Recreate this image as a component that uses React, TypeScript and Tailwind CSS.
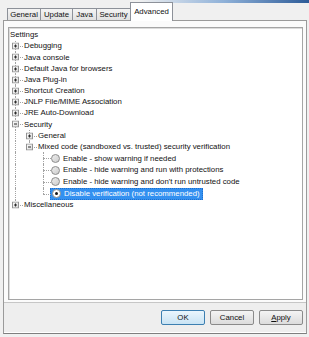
import React from 'react';

type RowProps = {
  guides?: boolean[];
  last?: boolean;
  expander?: 'plus' | 'minus';
  tall?: boolean;
  children: React.ReactNode;
};

const Expander = ({ open }: { open: boolean }) => (
  <svg width="7" height="7" viewBox="0 0 7 7" className="absolute left-[3px] top-1/2 -translate-y-1/2">
    <defs>
      <linearGradient id="exp" x1="0" y1="0" x2="1" y2="1">
        <stop offset="0" stopColor="#ffffff" />
        <stop offset="1" stopColor="#d9d9d9" />
      </linearGradient>
    </defs>
    <rect x="0.5" y="0.5" width="6" height="6" fill="url(#exp)" stroke="#939393" />
    <path d="M2 3.5h3" stroke="#2b2b2b" />
    {!open && <path d="M3.5 2v3" stroke="#2b2b2b" />}
  </svg>
);

const Row = ({ guides = [], last = false, expander, tall = false, children }: RowProps) => (
  <div className={`flex items-center ${tall ? 'h-[11.8px]' : 'h-[11.2px]'}`}>
    {guides.map((g, i) => (
      <div key={i} className="relative w-[14px] h-full shrink-0">
        {g && <div className="absolute left-[6px] top-0 bottom-0 border-l border-dotted border-[#a3a3a3]" />}
      </div>
    ))}
    <div className="relative w-[14px] h-full shrink-0">
      <div
        className={`absolute left-[6px] top-0 border-l border-dotted border-[#a3a3a3] ${last ? 'h-1/2' : 'bottom-0'}`}
      />
      <div className="absolute left-[6px] right-0 top-1/2 border-t border-dotted border-[#a3a3a3]" />
      {expander && <Expander open={expander === 'minus'} />}
    </div>
    {children}
  </div>
);

const Radio = ({ checked = false }: { checked?: boolean }) => (
  <span
    className={`w-[9px] h-[9px] shrink-0 rounded-full border border-[#8c8c8c] flex items-center justify-center ${
      checked ? 'bg-white' : 'bg-linear-to-br from-[#ececec] to-[#cdcdcd]'
    }`}
  >
    {checked && <span className="w-[3px] h-[3px] rounded-full bg-[#161616]" />}
  </span>
);

const Tab = ({ label, w }: { label: string; w: string }) => (
  <div
    className={`${w} h-[12px] -ml-px first:ml-0 border border-b-0 border-[#8d9199] bg-linear-to-b from-[#f4f4f4] to-[#e1e1e1] flex items-center justify-center leading-none`}
  >
    {label}
  </div>
);

const Button = ({ children, primary = false }: { children: React.ReactNode; primary?: boolean }) => (
  <div
    className={`w-[44px] h-[15px] rounded-[2px] border flex items-center justify-center leading-none ${
      primary
        ? 'border-[#3c7fb1] bg-linear-to-b from-[#eaf6fd] to-[#c9e3f4]'
        : 'border-[#8a8a8a] bg-linear-to-b from-[#f4f4f4] to-[#dcdcdc]'
    }`}
  >
    {children}
  </div>
);

const level1 = [
  'Debugging',
  'Java console',
  'Default Java for browsers',
  'Java Plug-in',
  'Shortcut Creation',
  'JNLP File/MIME Association',
  'JRE Auto-Download',
];

const radios = [
  'Enable - show warning if needed',
  'Enable - hide warning and run with protections',
  "Enable - hide warning and don't run untrusted code",
];

export default function App() {
  return (
    <div className="w-[309px] h-[337px] bg-[#f0f0f0] overflow-hidden flex flex-col text-[7.8px] text-[#111] font-['Liberation_Sans',Arial,sans-serif]">
      {/* tab strip */}
      <div className="relative h-[20px] shrink-0">
        <div className="absolute top-0 right-0 w-[170px] h-[3px] bg-linear-to-r from-[#f0f0f0] via-[#8fb1d8] to-[#2e5c98]" />
        <div className="relative flex items-end h-full pl-[7px]">
          <Tab label="General" w="w-[34px]" />
          <Tab label="Update" w="w-[33px]" />
          <Tab label="Java" w="w-[25px]" />
          <Tab label="Security" w="w-[35px]" />
          <div className="relative z-10 -ml-px w-[43px] h-[19px] -mb-px border border-b-0 border-[#8d9199] bg-white flex items-start justify-center pt-[5px] leading-none">
            Advanced
          </div>
        </div>
      </div>

      {/* panel frame */}
      <div className="ml-[3px] w-[304px] h-[314px] shrink-0 border border-[#9a9a9a] border-b-[#7f7f7f] flex flex-col">
        <div className="bg-[#fbfbfb] pt-[6px] pb-[2px] border-b border-[#c6c6c6]">
          <div className="ml-[4px] w-[295px] h-[273px] border border-[#a5a5a5] bg-white shadow-[inset_1px_1px_0_#dcdcdc]">
            <div className="pt-[1.4px]">
              <div className="h-[11.2px] flex items-center pl-[1px]">Settings</div>
              {level1.map((t) => (
                <Row key={t} expander="plus">
                  <span className="ml-[1px] whitespace-nowrap">{t}</span>
                </Row>
              ))}
              <Row expander="minus">
                <span className="ml-[1px]">Security</span>
              </Row>
              <Row guides={[true]} expander="plus">
                <span className="ml-[1px]">General</span>
              </Row>
              <Row guides={[true]} expander="minus" last>
                <span className="ml-[1px] whitespace-nowrap">Mixed code (sandboxed vs. trusted) security verification</span>
              </Row>
              {radios.map((t) => (
                <Row key={t} guides={[true, false]} tall>
                  <Radio />
                  <span className="ml-[3px] whitespace-nowrap">{t}</span>
                </Row>
              ))}
              <Row guides={[true, false]} tall last>
                <span className="-ml-px h-full flex items-center pl-[1px] pr-[2px] bg-[#3390f0] text-white border border-dotted border-[#1f6fcc]">
                  <Radio checked />
                  <span className="ml-[3px] whitespace-nowrap">Disable verification (not recommended)</span>
                </span>
              </Row>
              <Row expander="plus" last>
                <span className="ml-[1px]">Miscellaneous</span>
              </Row>
            </div>
          </div>
        </div>

        <div className="flex-1 bg-[#eeeeee] flex flex-col">
          <div className="flex justify-end gap-[5px] pr-[3px] mt-[7px]">
            <Button primary>OK</Button>
            <Button>Cancel</Button>
            <Button>
              <span>
                <span className="underline">A</span>pply
              </span>
            </Button>
          </div>
          <div className="mt-auto h-px bg-white" />
        </div>
      </div>
    </div>
  );
}
